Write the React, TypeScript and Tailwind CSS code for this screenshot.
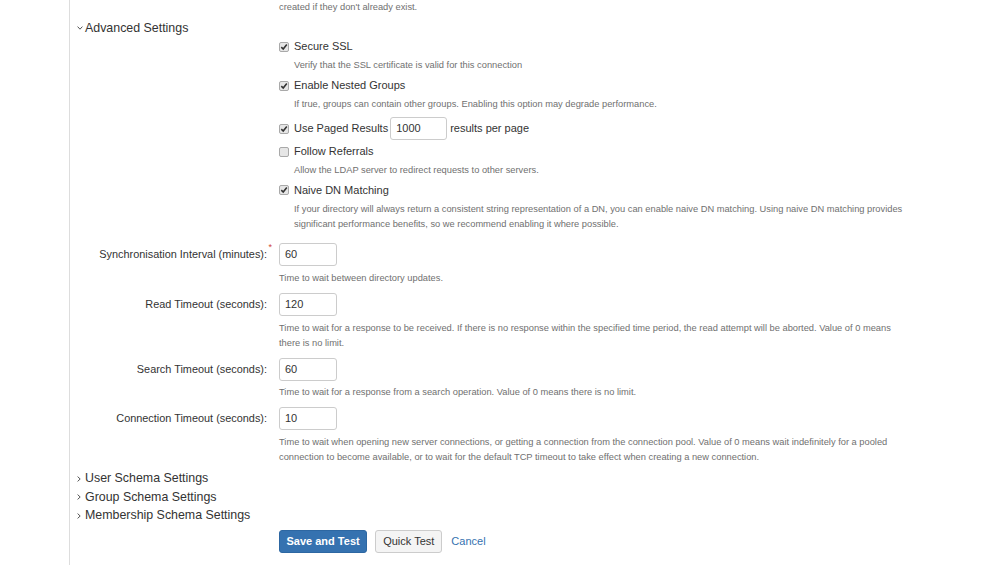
import React from "react";

const Chevron = ({ down }: { down?: boolean }) =>
  down ? (
    <svg width="6" height="4" viewBox="0 0 6 4" className="block">
      <path d="M0.6 0.6 L3 3.2 L5.4 0.6" stroke="#555" strokeWidth="1" fill="none" />
    </svg>
  ) : (
    <svg width="4" height="6" viewBox="0 0 4 6" className="block">
      <path d="M0.6 0.6 L3.2 3 L0.6 5.4" stroke="#555" strokeWidth="1" fill="none" />
    </svg>
  );

const Check = ({ checked }: { checked?: boolean }) => (
  <span className="inline-flex w-[10px] h-[10px] shrink-0 rounded-[2px] border border-[#a9a9a9] bg-[#e6e6e6] items-center justify-center">
    {checked && (
      <svg width="8" height="8" viewBox="0 0 8 8" className="block">
        <path d="M1.3 4.2 L3.2 6 L6.8 1.6" stroke="#333" strokeWidth="1.6" fill="none" />
      </svg>
    )}
  </span>
);

const Header = ({ label, down, cls }: { label: string; down?: boolean; cls: string }) => (
  <div className={`flex items-center pl-[7px] ${cls}`}>
    <span className="w-[8px] flex items-center">
      <Chevron down={down} />
    </span>
    <span className="text-[12.4px] text-[#333]">{label}</span>
  </div>
);

const Desc = ({ children, cls }: { children: React.ReactNode; cls: string }) => (
  <div className={`text-[9.3px] text-[#707070] whitespace-nowrap ${cls}`}>{children}</div>
);

const Input = ({ value, w }: { value: string; w: string }) => (
  <div className={`h-[23px] ${w} border border-[#ccc] rounded-[3px] bg-white flex items-center pl-[5px] text-[11px] text-[#333]`}>
    {value}
  </div>
);

const FieldRow = ({
  label,
  value,
  required,
  cls,
}: {
  label: string;
  value: string;
  required?: boolean;
  cls: string;
}) => (
  <div className={`flex items-center ${cls}`}>
    <div className="w-[209px] flex justify-end pr-[12px] text-[10.9px] text-[#333]">
      <span className="relative">
        {label}
        {required && (
          <span className="absolute -right-[5px] -top-[3px] text-[9px] text-[#d04437] leading-none">*</span>
        )}
      </span>
    </div>
    <Input value={value} w="w-[58px]" />
  </div>
);

export default function App() {
  return (
    <div
      className="w-[999px] h-[565px] overflow-hidden bg-white flex"
      style={{ fontFamily: '"Liberation Sans", Arial, sans-serif' }}
    >
      <div className="w-[70px] h-full border-r border-[#dddddd] shrink-0" />
      <div className="flex flex-col">
        <Desc cls="pl-[209px] h-[14px] leading-[14px]">created if they don't already exist.</Desc>
        <Header label="Advanced Settings" down cls="mt-[5px] h-[18px]" />

        <div className="pl-[209px] flex flex-col">
          <div className="flex items-center gap-[5px] h-[19px] text-[11px] text-[#333]">
            <Check checked />
            <span>Secure SSL</span>
          </div>
          <Desc cls="h-[18px] leading-[18px] pl-[15px]">
            Verify that the SSL certificate is valid for this connection
          </Desc>
          <div className="flex items-center gap-[5px] h-[19px] mt-[2px] text-[11px] text-[#333]">
            <Check checked />
            <span>Enable Nested Groups</span>
          </div>
          <Desc cls="h-[18px] leading-[18px] pl-[15px]">
            If true, groups can contain other groups. Enabling this option may degrade performance.
          </Desc>
          <div className="flex items-center h-[25px] mt-[3px] text-[11px] text-[#333]">
            <Check checked />
            <span className="ml-[5px]">Use Paged Results</span>
            <span className="ml-[2px]">
              <Input value="1000" w="w-[57px]" />
            </span>
            <span className="ml-[3px]">results per page</span>
          </div>
          <div className="flex items-center gap-[5px] h-[19px] mt-[1px] text-[11px] text-[#333]">
            <Check />
            <span>Follow Referrals</span>
          </div>
          <Desc cls="h-[19px] leading-[19px] pl-[15px]">
            Allow the LDAP server to redirect requests to other servers.
          </Desc>
          <div className="flex items-center gap-[5px] h-[20px] text-[11px] text-[#333]">
            <Check checked />
            <span>Naive DN Matching</span>
          </div>
          <Desc cls="mt-[2px] leading-[15px] pl-[15px]">
            If your directory will always return a consistent string representation of a DN, you can enable naive DN
            matching. Using naive DN matching provides
            <br />
            significant performance benefits, so we recommend enabling it where possible.
          </Desc>
        </div>

        <FieldRow label="Synchronisation Interval (minutes):" value="60" required cls="mt-[11px]" />
        <Desc cls="pl-[209px] mt-[4.5px] leading-[15px]">Time to wait between directory updates.</Desc>

        <FieldRow label="Read Timeout (seconds):" value="120" cls="mt-[7px]" />
        <Desc cls="pl-[209px] mt-[5px] leading-[15px]">
          Time to wait for a response to be received. If there is no response within the specified time period, the
          read attempt will be aborted. Value of 0 means
          <br />
          there is no limit.
        </Desc>

        <FieldRow label="Search Timeout (seconds):" value="60" cls="mt-[7.5px]" />
        <Desc cls="pl-[209px] mt-[4px] leading-[15px]">
          Time to wait for a response from a search operation. Value of 0 means there is no limit.
        </Desc>

        <FieldRow label="Connection Timeout (seconds):" value="10" cls="mt-[6.5px]" />
        <Desc cls="pl-[209px] mt-[5px] leading-[15.5px]">
          Time to wait when opening new server connections, or getting a connection from the connection pool. Value of
          0 means wait indefinitely for a pooled
          <br />
          connection to become available, or to wait for the default TCP timeout to take effect when creating a new
          connection.
        </Desc>

        <Header label="User Schema Settings" cls="mt-[4px] h-[18.5px]" />
        <Header label="Group Schema Settings" cls="h-[18.5px]" />
        <Header label="Membership Schema Settings" cls="h-[18.5px]" />

        <div className="pl-[209px] mt-[4.5px] flex items-center h-[23px]">
          <button className="h-[23px] px-[6.5px] rounded-[3px] bg-[#3572b0] border border-[#2d67a2] text-white text-[11px] font-bold">
            Save and Test
          </button>
          <button className="ml-[8px] h-[23px] px-[7px] rounded-[3px] bg-[#f4f4f4] border border-[#cccccc] text-[#333] text-[11px]">
            Quick Test
          </button>
          <span className="ml-[9px] text-[11px] text-[#3572b0]">Cancel</span>
        </div>
      </div>
    </div>
  );
}
